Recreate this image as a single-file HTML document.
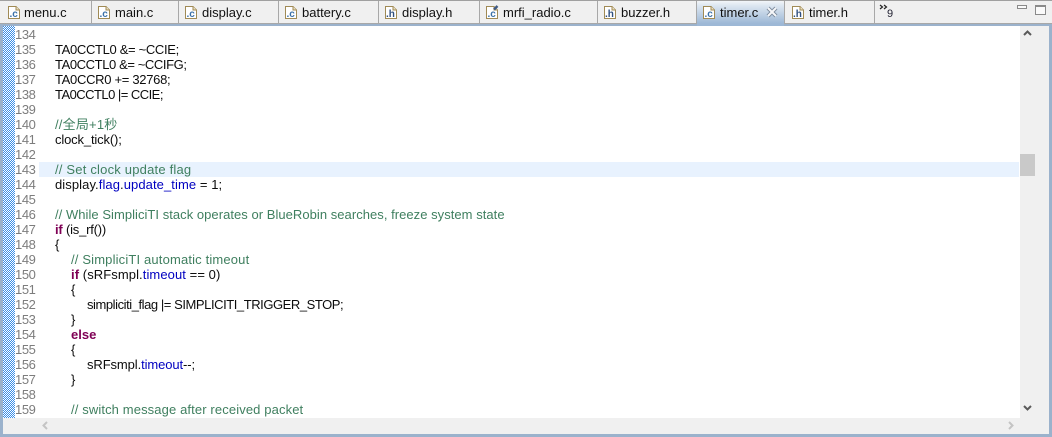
<!DOCTYPE html>
<html><head><meta charset="utf-8"><style>
html,body{margin:0;padding:0;width:1052px;height:437px;overflow:hidden;background:#fff}
body{position:relative;font-family:"Liberation Sans","Noto Sans CJK SC",sans-serif;font-size:13px;color:#111}
div{position:absolute;box-sizing:border-box}
.tabbar{left:0;top:0;width:1052px;height:24px;background:#f0f0f0;border-top:1px solid #a0a0a0}
.sep{top:1px;width:1px;height:23px;background:#a8a8a8}
.tabline{left:0;top:23px;width:1052px;height:1px;background:#a8a8a8}
.band{left:0;top:24px;width:1052px;height:2px;background:#9bb2cc}
.active{left:697px;top:1px;width:87px;height:25px;background:linear-gradient(#f2f5f9,#dbe5f0 20%,#9db8d6 90%);border-radius:3px 3px 0 0}
.t{top:5px;font-size:13px;line-height:16px;white-space:pre;color:#111}
svg.i{position:absolute;top:4px;width:14px;height:16px}
.ruler{left:3px;top:26px;width:12px;height:392px}
.n{left:15px;width:21px;font-size:13px;letter-spacing:-.4px;color:#7d7d7d;line-height:15px;white-space:pre}
.l{left:55px;font-size:13px;line-height:15px;white-space:pre;color:#0c0c0c}
.c{color:#3f7f5f}.k{color:#7f0055;font-weight:bold}.f{color:#0000c0}
.hl{left:39px;top:162px;width:980px;height:15px;background:#e8f2fe}
.vs{left:1020px;top:26px;width:16px;height:392px;background:#f0f0f0}
.thumb{left:1020px;top:154px;width:15px;height:22px;background:#c9c9c9}
.hs{left:3px;top:418px;width:1046px;height:16px;background:#f0f0f0}
.rside{left:1036px;top:26px;width:13px;height:408px;background:#f0f0f0}
.bb{left:0;top:434px;width:1052px;height:3px;background:#9bb2cc}
.lb{left:0;top:24px;width:3px;height:413px;background:#9bb2cc}
.rb{left:1049px;top:24px;width:3px;height:413px;background:#9bb2cc}
</style></head><body>
<div class="tabbar"></div>
<div class="tabline"></div>
<div class="band"></div>
<div class="active"></div>
<div class="sep" style="left:91px"></div>
<div class="sep" style="left:178px"></div>
<div class="sep" style="left:278px"></div>
<div class="sep" style="left:378px"></div>
<div class="sep" style="left:479px"></div>
<div class="sep" style="left:597px"></div>
<div class="sep" style="left:696px"></div>
<div class="sep" style="left:784px"></div>
<div class="sep" style="left:874px"></div>

<svg width="0" height="0" style="position:absolute"><defs>
<symbol id="doc" viewBox="0 0 14 16"><path d="M1.500 2.500H9L12.500 6V14.500H1.500Z" fill="#fff" stroke="#a08a55"/><path d="M9 2.500V6H12.500" fill="#efe6c8" stroke="#a08a55"/></symbol>
</defs></svg>

<svg class="i" style="left:7px" viewBox="0 0 14 16"><use href="#doc"/><text x="2.500" y="13" font-size="10" font-weight="bold" fill="#3a70a8">.c</text></svg>
<div class="t" style="left:24px">menu.c</div>
<svg class="i" style="left:97px" viewBox="0 0 14 16"><use href="#doc"/><text x="2.500" y="13" font-size="10" font-weight="bold" fill="#3a70a8">.c</text></svg>
<div class="t" style="left:115px">main.c</div>
<svg class="i" style="left:184px" viewBox="0 0 14 16"><use href="#doc"/><text x="2.500" y="13" font-size="10" font-weight="bold" fill="#3a70a8">.c</text></svg>
<div class="t" style="left:202px">display.c</div>
<svg class="i" style="left:284px" viewBox="0 0 14 16"><use href="#doc"/><text x="2.500" y="13" font-size="10" font-weight="bold" fill="#3a70a8">.c</text></svg>
<div class="t" style="left:302px">battery.c</div>
<svg class="i" style="left:384px" viewBox="0 0 14 16"><use href="#doc"/><text x="2" y="13" font-size="10" font-weight="bold" fill="#2f4f7f">.h</text></svg>
<div class="t" style="left:402px">display.h</div>
<svg class="i" style="left:485px" viewBox="0 0 14 16"><use href="#doc"/><text x="2.500" y="13" font-size="10" font-weight="bold" fill="#3a70a8">.c</text><path d="M9 5.500L12.500 2" stroke="#3f5a85" stroke-width="2.500"/></svg>
<div class="t" style="left:503px">mrfi_radio.c</div>
<svg class="i" style="left:603px" viewBox="0 0 14 16"><use href="#doc"/><text x="2" y="13" font-size="10" font-weight="bold" fill="#2f4f7f">.h</text></svg>
<div class="t" style="left:621px">buzzer.h</div>
<svg class="i" style="left:702px" viewBox="0 0 14 16"><use href="#doc"/><text x="2.500" y="13" font-size="10" font-weight="bold" fill="#3a70a8">.c</text></svg>
<div class="t" style="left:720px">timer.c</div>
<svg style="position:absolute;left:766px;top:6px" width="12" height="12" viewBox="0 0 12 12"><path d="M2 2L10 10M10 2L2 10" stroke="#7d8b9c" stroke-width="4"/><path d="M2 2L10 10M10 2L2 10" stroke="#f6f7f9" stroke-width="2"/></svg>
<svg class="i" style="left:791px" viewBox="0 0 14 16"><use href="#doc"/><text x="2" y="13" font-size="10" font-weight="bold" fill="#2f4f7f">.h</text></svg>
<div class="t" style="left:809px">timer.h</div>
<svg style="position:absolute;left:879px;top:4px" width="10" height="6" viewBox="0 0 10 6"><path d="M1 1L3.500 3L1 5M5 1L7.500 3L5 5" fill="none" stroke="#222" stroke-width="1.200"/></svg>
<div style="left:887px;top:8px;font-size:11px;line-height:12px;color:#223">9</div>
<div style="left:1017px;top:5px;width:10px;height:4px;border:1px solid #8a8a8a;background:#fafafa"></div>
<div style="left:1035px;top:5px;width:11px;height:10px;border:1px solid #8a8a8a;border-top-width:2px;background:#fafafa"></div>

<svg class="ruler" style="position:absolute;left:3px;top:26px" width="12" height="392" shape-rendering="crispEdges"><defs><pattern id="dth" width="2" height="2" patternUnits="userSpaceOnUse"><rect width="2" height="2" fill="#fff"/><rect width="1" height="1" fill="#3a8ee8"/><rect x="1" y="1" width="1" height="1" fill="#3a8ee8"/></pattern></defs><rect width="12" height="392" fill="url(#dth)"/></svg>
<div class="hl"></div>
<div class="vs"></div><div class="thumb"></div><div class="rside"></div><div class="hs"></div>
<div class="bb"></div><div class="lb"></div><div class="rb"></div>
<svg style="position:absolute;left:1023px;top:30px" width="9" height="6" viewBox="0 0 9 6"><path d="M1 5L4.500 1.500L8 5" fill="none" stroke="#5a5a5a" stroke-width="2"/></svg>
<svg style="position:absolute;left:1023px;top:405px" width="9" height="6" viewBox="0 0 9 6"><path d="M1 1L4.500 4.500L8 1" fill="none" stroke="#5a5a5a" stroke-width="2"/></svg>
<svg style="position:absolute;left:42px;top:421px" width="6" height="9" viewBox="0 0 6 9"><path d="M5 1L1.500 4.500L5 8" fill="none" stroke="#c4c4c4" stroke-width="2"/></svg>
<svg style="position:absolute;left:1008px;top:421px" width="6" height="9" viewBox="0 0 6 9"><path d="M1 1L4.500 4.500L1 8" fill="none" stroke="#c4c4c4" stroke-width="2"/></svg>

<div class="n" style="top:27px">134</div>
<div class="n" style="top:42px">135</div>
<div class="n" style="top:57px">136</div>
<div class="n" style="top:72px">137</div>
<div class="n" style="top:87px">138</div>
<div class="n" style="top:102px">139</div>
<div class="n" style="top:117px">140</div>
<div class="n" style="top:132px">141</div>
<div class="n" style="top:147px">142</div>
<div class="n" style="top:162px">143</div>
<div class="n" style="top:177px">144</div>
<div class="n" style="top:192px">145</div>
<div class="n" style="top:207px">146</div>
<div class="n" style="top:222px">147</div>
<div class="n" style="top:237px">148</div>
<div class="n" style="top:252px">149</div>
<div class="n" style="top:267px">150</div>
<div class="n" style="top:282px">151</div>
<div class="n" style="top:297px">152</div>
<div class="n" style="top:312px">153</div>
<div class="n" style="top:327px">154</div>
<div class="n" style="top:342px">155</div>
<div class="n" style="top:357px">156</div>
<div class="n" style="top:372px">157</div>
<div class="n" style="top:387px">158</div>
<div class="n" style="top:402px">159</div>

<div class="l" style="top:42px;letter-spacing:-.33px">TA0CCTL0 &amp;= ~CCIE;</div>
<div class="l" style="top:57px;letter-spacing:-.4px">TA0CCTL0 &amp;= ~CCIFG;</div>
<div class="l" style="top:72px;letter-spacing:-.3px">TA0CCR0 += 32768;</div>
<div class="l" style="top:87px;letter-spacing:-.53px">TA0CCTL0 |= CCIE;</div>
<div class="l c" style="top:117px;letter-spacing:.2px">//全局+1秒</div>
<div class="l" style="top:132px;letter-spacing:-.15px">clock_tick();</div>
<div class="l c" style="top:162px;letter-spacing:.2px">// Set clock update flag</div>
<div class="l" style="top:177px;letter-spacing:.08px">display.<span class="f">flag</span>.<span class="f">update_time</span> = 1;</div>
<div class="l c" style="top:207px;letter-spacing:.04px">// While SimpliciTI stack operates or BlueRobin searches, freeze system state</div>
<div class="l" style="top:222px;letter-spacing:-.2px"><span class="k">if</span> (is_rf())</div>
<div class="l" style="top:237px">{</div>
<div class="l c" style="top:252px;left:71px;letter-spacing:.16px">// SimpliciTI automatic timeout</div>
<div class="l" style="top:267px;left:71px;letter-spacing:.08px"><span class="k">if</span> (sRFsmpl.<span class="f">timeout</span> == 0)</div>
<div class="l" style="top:282px;left:71px">{</div>
<div class="l" style="top:297px;left:87px;letter-spacing:-.44px">simpliciti_flag |= SIMPLICITI_TRIGGER_STOP;</div>
<div class="l" style="top:312px;left:71px">}</div>
<div class="l" style="top:327px;left:71px"><span class="k">else</span></div>
<div class="l" style="top:342px;left:71px">{</div>
<div class="l" style="top:357px;left:87px;letter-spacing:-.1px">sRFsmpl.<span class="f">timeout</span>--;</div>
<div class="l" style="top:372px;left:71px">}</div>
<div class="l c" style="top:402px;left:71px;letter-spacing:.12px">// switch message after received packet</div>
</body></html>
